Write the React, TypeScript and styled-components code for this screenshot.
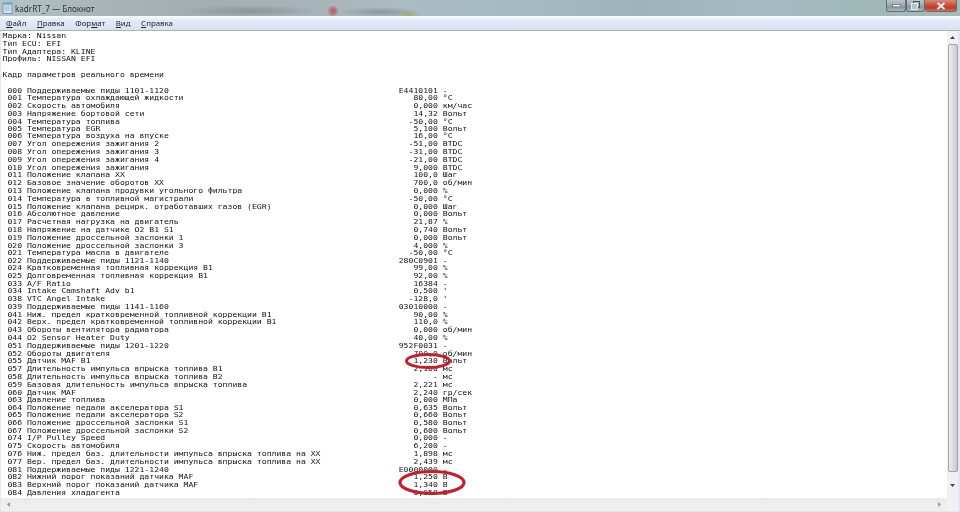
import styled, { createGlobalStyle } from 'styled-components';

const GlobalStyle = createGlobalStyle`
    html, body {
        margin: 0;
        padding: 0;
        background: #fff;
        overflow: hidden;
    }
`
const Win = styled.div`
    width: 960px;
    height: 512px;
    display: flex;
    flex-direction: column;
    position: relative;
    overflow: hidden;
    background: #dfe9f3;
    font-family: "Noto Sans", "Liberation Sans", sans-serif;
`
const TitleBar = styled.div`
    height: 16px;
    flex: none;
    display: flex;
    justify-content: space-between;
    background:
        radial-gradient(ellipse 6px 6px at 333px 11px, #c2505f 0, #c2505f88 55%, transparent 100%),
        radial-gradient(ellipse 40px 5px at 380px 12px, #8a969b 0, transparent 100%),
        radial-gradient(ellipse 70px 6px at 250px 11px, #8b969b 0, transparent 100%),
        radial-gradient(ellipse 14px 5px at 408px 15px, #a3b26a 0, transparent 100%),
        linear-gradient(90deg, #b5c3c8 0, #a8b4b6 100px, #a4aeb0 200px, #a8b5ba 330px, #aabcc4 400px, #a5bac3 520px, #9fb3bc 640px, #a4bbc3 760px, #9fb8b8 860px, #a9b9b6 960px);
`
const TitleLeft = styled.div`
    display: flex;
    align-items: center;
    gap: 2px;
    padding-left: 2px;
    font-size: 8.1px;
    color: #2c3337;
    filter: blur(0.25px);
`
const WinButtons = styled.div`
    display: flex;
    align-items: flex-start;
    margin-right: 3px;
`
const WinButton = styled.div<{ $w: number; $close?: boolean }>`
    width: ${p => p.$w}px;
    height: 12px;
    box-sizing: border-box;
    display: flex;
    align-items: center;
    justify-content: center;
    border: 1px solid #5f6e78;
    border-top: none;
    border-left-width: ${p => (p.$close ? 0 : 1)}px;
    border-radius: 0 0 3px 3px;
    background: ${p =>
        p.$close
            ? 'linear-gradient(#d98a7c 0, #c9503e 45%, #bd3a2c 70%, #d2705c 100%)'
            : 'linear-gradient(#b9c6cc 0, #9fadb4 45%, #8a99a1 60%, #a6b6bc 100%)'};
`
const MenuBar = styled.div`
    height: 14px;
    flex: none;
    display: flex;
    align-items: center;
    gap: 10.5px;
    padding-left: 6px;
    border-bottom: 1px solid #a9b1c0;
    background: linear-gradient(#fbfcfe 0, #e6eaf6 30%, #dce1f2 100%);
    font-size: 7.9px;
    color: #23262c;
`
const MenuItem = styled.span`
    filter: blur(0.2px);
    u {
        text-underline-offset: 1px;
    }
`
const Body = styled.div`
    flex: 1;
    min-height: 0;
    display: flex;
    padding-left: 1px;
    padding-right: 2px;
`
const TextArea = styled.div`
    flex: 1;
    min-width: 0;
    background: #fff;
    overflow: hidden;
    padding: 1px 0 0 1.5px;
`
// glyphs in the shot are wider than they are tall, so the block is squeezed vertically
const NoteText = styled.pre`
    margin: 0;
    height: 100%;
    font-family: "DejaVu Sans Mono", "Liberation Mono", monospace;
    font-size: 8.14px;
    line-height: 8.8px;
    color: #111;
    transform: scaleY(0.88);
    transform-origin: top left;
    filter: blur(0.28px);
`
const VScroll = styled.div`
    width: 11px;
    flex: none;
    display: flex;
    flex-direction: column;
    align-items: stretch;
    background: #f1f1f1;
`
const ArrowCell = styled.div<{ $size: number }>`
    height: ${p => p.$size}px;
    flex: none;
    display: flex;
    align-items: center;
    justify-content: center;
`
const VThumb = styled.div`
    flex: 1;
    margin: 0 0.5px;
    border: 1px solid #a3a3a3;
    border-radius: 2px;
    background: linear-gradient(90deg, #ececec 0, #dcdcdc 50%, #c8c8c8 100%);
`
const BottomRow = styled.div`
    height: 13px;
    flex: none;
    display: flex;
    padding-left: 1px;
    padding-right: 2px;
    margin-bottom: 1px;
`
const HScroll = styled.div`
    flex: 1;
    display: flex;
    align-items: center;
    justify-content: space-between;
    padding: 0 5px;
    background: linear-gradient(#ebebeb, #f0f0f0);
`
const Corner = styled.div`
    width: 11px;
    flex: none;
    background: #f1f1f1;
`
const Marks = styled.svg`
    position: absolute;
    left: 0;
    top: 0;
    pointer-events: none;
`

type Row = [string, string, string, string]

const header = [
    'Марка: Nissan',
    'Тип ECU: EFI',
    'Тип Адаптера: KLINE',
    'Профиль: NISSAN EFI',
    '',
    'Кадр параметров реального времени',
    '',
]

const rows: Row[] = [
    ['000', 'Поддерживаемые пиды 1101-1120', 'E4410101', '-'],
    ['001', 'Температура охлаждающей жидкости', '80,00', '°C'],
    ['002', 'Скорость автомобиля', '0,000', 'км/час'],
    ['003', 'Напряжение бортовой сети', '14,32', 'Вольт'],
    ['004', 'Температура топлива', '-50,00', '°C'],
    ['005', 'Температура EGR', '5,100', 'Вольт'],
    ['006', 'Температура воздуха на впуске', '16,00', '°C'],
    ['007', 'Угол опережения зажигания 2', '-51,00', 'BTDC'],
    ['008', 'Угол опережения зажигания 3', '-31,00', 'BTDC'],
    ['009', 'Угол опережения зажигания 4', '-21,00', 'BTDC'],
    ['010', 'Угол опережения зажигания', '9,000', 'BTDC'],
    ['011', 'Положение клапана XX', '100,0', 'Шаг'],
    ['012', 'Базовое значение оборотов XX', '700,0', 'об/мин'],
    ['013', 'Положение клапана продувки угольного фильтра', '0,000', '%'],
    ['014', 'Температура в топливной магистрали', '-50,00', '°C'],
    ['015', 'Положение клапана рецирк. отработавших газов (EGR)', '0,000', 'Шаг'],
    ['016', 'Абсолютное давление', '0,000', 'Вольт'],
    ['017', 'Расчетная нагрузка на двигатель', '21,87', '%'],
    ['018', 'Напряжение на датчике O2 B1 S1', '0,740', 'Вольт'],
    ['019', 'Положение дроссельной заслонки 1', '0,000', 'Вольт'],
    ['020', 'Положение дроссельной заслонки 3', '4,000', '%'],
    ['021', 'Температура масла в двигателе', '-50,00', '°C'],
    ['022', 'Поддерживаемые пиды 1121-1140', '280C0901', '-'],
    ['024', 'Кратковременная топливная коррекция B1', '99,00', '%'],
    ['025', 'Долговременная топливная коррекция B1', '92,00', '%'],
    ['033', 'A/F Ratio', '16384', '-'],
    ['034', 'Intake Camshaft Adv b1', '0,500', "'"],
    ['038', 'VTC Angel Intake', '-128,0', "'"],
    ['039', 'Поддерживаемые пиды 1141-1160', '03010000', '-'],
    ['041', 'Ниж. предел кратковременной топливной коррекции B1', '90,00', '%'],
    ['042', 'Верх. предел кратковременной топливной коррекции B1', '110,0', '%'],
    ['043', 'Обороты вентилятора радиатора', '0,000', 'об/мин'],
    ['044', 'O2 Sensor Heater Duty', '40,00', '%'],
    ['051', 'Поддерживаемые пиды 1201-1220', '952F0031', '-'],
    ['052', 'Обороты двигателя', '700,0', 'об/мин'],
    ['055', 'Датчик MAF B1', '1,230', 'Вольт'],
    ['057', 'Длительность импульса впрыска топлива B1', '2,100', 'мс'],
    ['058', 'Длительность импульса впрыска топлива B2', '-', 'мс'],
    ['059', 'Базовая длительность импульса впрыска топлива', '2,221', 'мс'],
    ['060', 'Датчик MAF', '2,240', 'гр/сек'],
    ['063', 'Давление топлива', '0,000', 'МПа'],
    ['064', 'Положение педали акселератора S1', '0,635', 'Вольт'],
    ['065', 'Положение педали акселератора S2', '0,660', 'Вольт'],
    ['066', 'Положение дроссельной заслонки S1', '0,580', 'Вольт'],
    ['067', 'Положение дроссельной заслонки S2', '0,600', 'Вольт'],
    ['074', 'I/P Pulley Speed', '0,000', '-'],
    ['075', 'Скорость автомобиля', '6,200', '-'],
    ['076', 'Ниж. предел баз. длительности импульса впрыска топлива на XX', '1,898', 'мс'],
    ['077', 'Вер. предел баз. длительности импульса впрыска топлива на XX', '2,439', 'мс'],
    ['081', 'Поддерживаемые пиды 1221-1240', 'E0000000', '-'],
    ['082', 'Нижний порог показаний датчика MAF', '1,250', 'В'],
    ['083', 'Верхний порог показаний датчика MAF', '1,340', 'В'],
    ['084', 'Давления хладагента', '0,050', 'В'],
]

// notepad text: name padded up to the value column
const formatRow = ([code, name, value, unit]: Row) =>
    ` ${code} ${name}`.padEnd(81) + value.padStart(8) + ' ' + unit

const text = [...header, ...rows.map(formatRow)].join('\n')

const NotepadIcon = () => (
    <svg width="11" height="12" viewBox="0 0 11 12">
        <rect x="1" y="1" width="9" height="10.5" fill="#cfe6f2" stroke="#6d8ea3" strokeWidth="0.8" />
        <path d="M2.5 4h6M2.5 6h6M2.5 8h6" stroke="#8fa9b8" strokeWidth="0.7" />
        <path d="M1 1h9v1.6H1z" fill="#5fa7c9" />
    </svg>
)

const Arrow = ({ dir }: { dir: 'up' | 'down' | 'left' | 'right' }) => {
    const points = {
        up: '0,4 5,4 2.5,1',
        down: '0,1 5,1 2.5,4',
        left: '4,0 4,5 1,2.5',
        right: '1,0 1,5 4,2.5',
    }[dir]
    return (
        <svg width="5" height="5" viewBox="0 0 5 5">
            <polygon points={points} fill={dir === 'up' || dir === 'down' ? '#444' : '#999'} />
        </svg>
    )
}

export default function App() {
    return (
        <Win>
            <GlobalStyle />
            <TitleBar>
                <TitleLeft>
                    <NotepadIcon />
                    kadrRT_7 — Блокнот
                </TitleLeft>
                <WinButtons>
                    <WinButton $w={20}>
                        <svg width="9" height="4" viewBox="0 0 9 4">
                            <rect x="0.5" y="0.5" width="8" height="2.4" fill="#f2f4f5" stroke="#4c5a62" strokeWidth="0.6" />
                        </svg>
                    </WinButton>
                    <WinButton $w={19}>
                        <svg width="9" height="9" viewBox="0 0 9 9">
                            <rect x="2.5" y="0.5" width="6" height="6" fill="none" stroke="#3e4a52" strokeWidth="0.9" />
                            <rect x="0.5" y="2.5" width="6" height="6" fill="#b6c3c9" stroke="#eef1f3" strokeWidth="0.9" />
                        </svg>
                    </WinButton>
                    <WinButton $w={32} $close>
                        <svg width="10" height="8" viewBox="0 0 10 8">
                            <path d="M1.5 1l7 6M8.5 1l-7 6" stroke="#f4eeee" strokeWidth="2" />
                        </svg>
                    </WinButton>
                </WinButtons>
            </TitleBar>
            <MenuBar>
                <MenuItem><u>Ф</u>айл</MenuItem>
                <MenuItem><u>П</u>равка</MenuItem>
                <MenuItem>Фор<u>м</u>ат</MenuItem>
                <MenuItem><u>В</u>ид</MenuItem>
                <MenuItem><u>С</u>правка</MenuItem>
            </MenuBar>
            <Body>
                <TextArea>
                    <NoteText>{text}</NoteText>
                </TextArea>
                <VScroll>
                    <ArrowCell $size={13}><Arrow dir="up" /></ArrowCell>
                    <VThumb />
                    <ArrowCell $size={26}><Arrow dir="down" /></ArrowCell>
                </VScroll>
            </Body>
            <BottomRow>
                <HScroll>
                    <Arrow dir="left" />
                    <Arrow dir="right" />
                </HScroll>
                <Corner />
            </BottomRow>
            <Marks width="960" height="512" viewBox="0 0 960 512">
                <ellipse cx="428" cy="361" rx="21.5" ry="6.5" fill="none" stroke="#c81e2c" strokeWidth="3" />
                <ellipse cx="432" cy="482.5" rx="32" ry="11" fill="none" stroke="#c81e2c" strokeWidth="3.2" />
            </Marks>
        </Win>
    );
}
